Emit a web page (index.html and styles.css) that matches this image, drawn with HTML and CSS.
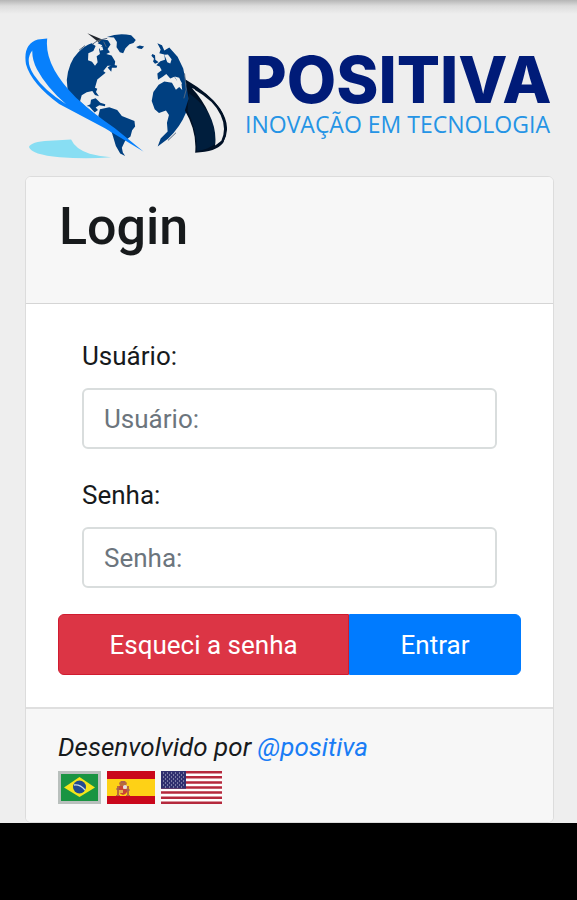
FILE: index.html
```html
<!DOCTYPE html>
<html lang="pt-BR">
<head>
  <meta charset="UTF-8">
  <meta name="viewport" content="width=device-width, initial-scale=1">
  <title>Positiva - Login</title>
  <link rel="stylesheet" href="styles.css">
</head>
<body>
  <main class="page">
    <header class="brand">
      <svg class="brand-globe" viewBox="27 36 609 384" aria-hidden="true">
        <!-- continents -->
        <g fill="#003f80">
          <path d="M156 216 L153 180 Q158 126 187 97 Q205 77 228 69 L240 77 L233 92 L218 99 L217 120 L229 125 L238 137 L246 126 L243 108 L253 101 L250 87 L260 75 L246 69 L258 57 L277 60 L285 73 L276 86 L283 96 L272 101 L288 106 L299 124 L297 137 L276 137 L263 153 L270 158 L245 178 L238 203 L245 206 L241 216 L250 229 L238 225 L230 213 L213 217 L198 226 L193 244 L208 259 L196 263 Q170 242 156 216Z"/>
          <path d="M274 50 Q310 36 347 45 L361 59 L354 68 L342 72 L330 84 L323 99 L313 96 L303 81 L304 65 L295 52Z"/>
          <path d="M362 80 L373 76 L386 79 L379 86 L369 85Z"/>
          <path d="M276 142 L290 133 L305 137 L303 143 L289 143 L287 155Z"/>
          <path d="M253 268 L281 262 L305 270 L319 288 L357 303 L359 320 L350 331 L345 350 L329 363 L319 384 L322 398 L329 409 L314 401 L301 379 L289 339 L257 306 L248 288Z"/>
          <path d="M226 239 L240 235 L254 248 L269 253 L268 259 L251 256 L240 263 L247 270 L237 278 L221 260 L213 258 L224 253Z"/>
          <path d="M426 69 L440 75 L447 91 L462 82 L487 110 L504 145 L511 180 L520 215 L520 250 L512 279 Q495 321 458 357 L427 380 L436 356 L457 335 L455 309 L461 285 L452 272 L431 279 L418 268 L409 243 L414 216 L430 194 L447 184 L470 188 L482 209 L492 201 L501 210 L498 185 L486 183 L477 170 L465 175 L453 162 L442 170 L428 179 L426 160 L439 150 L433 139 L423 135 L435 123 L449 119 L447 103 L432 99 L436 88Z"/>
          <path d="M411 101 L419 105 L420 119 L430 126 L419 131 L413 124 L416 116 L408 107Z"/>
        </g>
        <g fill="#eee">
          <path d="M447 104 L458 103 L469 117 L465 130 L456 126Z"/>
          <path d="M478 169 L492 173 L500 191 L491 195 L485 181Z"/>
          <path d="M252 80 L260 79 L263 89 L253 91Z"/>
        </g>
        <path d="M215 39 L260 58 L248 65Z" fill="#20252c"/>
        <path d="M190 90 L208 76 M230 72 L246 61 L275 54 M264 64 L272 80 M508 160 L513 209 L506 235 M482 339 L458 362" stroke="#536780" stroke-width="3" fill="none"/>
        <!-- right swoosh -->
        <path d="M511 178 Q586 222 615 266 Q652 321 624 370 Q603 397 540 399 Q546 334 509 272 L520 237Z" fill="#001126"/>
        <path d="M517 272 L521 220 Q588 267 600 333 Q605 359 600 373 Q580 389 545 394 Q547 336 517 272Z" fill="#001e3d"/>
        <path d="M530 204 Q590 226 612 272 Q646 325 620 367 L600 378 Q606 330 582 282 Q562 238 530 204Z" fill="#eee"/>
        <path d="M540 206 Q601 240 620 284 Q640 326 622 365 L602 381" fill="none" stroke="#001126" stroke-width="7"/>
        <!-- left swoosh -->
        <path d="M94 55 Q84 136 181 233 Q235 282 298 325 L384 395 L268 325 L130 252 Q46 190 30 132 Q20 72 66 58Z" fill="#0780fc"/>
        <path d="M49 91 Q48 119 63 147 Q91 200 151 253 Q84 211 54 165 Q25 121 49 91Z" fill="#eee"/>
        <path d="M166 359 Q179 388 222 402 Q257 411 287 413 Q212 419 132 413 Q46 405 39 382 Q44 366 100 363Z" fill="#88def3"/>
      </svg>
      <div class="brand-text">
        <span class="brand-name">POSITIVA</span>
        <span class="brand-tagline">INOVAÇÃO EM TECNOLOGIA</span>
      </div>
    </header>

    <form class="card">
      <div class="card-header">
        <h2>Login</h2>
      </div>
      <div class="card-body">
        <div class="form-group">
          <label for="usuario">Usuário:</label>
          <input type="text" id="usuario" name="usuario" placeholder="Usuário:">
        </div>
        <div class="form-group">
          <label for="senha">Senha:</label>
          <input type="password" id="senha" name="senha" placeholder="Senha:">
        </div>
        <div class="btn-group">
          <button type="button" class="btn btn-danger">Esqueci a senha</button>
          <button type="submit" class="btn btn-primary">Entrar</button>
        </div>
      </div>
      <div class="card-footer">
        <em>Desenvolvido por <a href="#">@positiva</a></em>
        <div class="flags">
          <a href="#" aria-label="Português">
            <svg width="43" height="33" viewBox="0 0 43 33">
              <path fill="#b9c0bd" d="M0 0h43v33H0z"/>
              <path fill="#199442" d="M3 3h37v27H3z"/>
              <path fill="#f5e51b" d="M21.500 6 L37 16.500 L21.500 26 L6 16.500Z"/>
              <circle cx="21.500" cy="16" r="6.500" fill="#214a91"/>
              <path d="M16 14 Q22 13 27 19" stroke="#c8d9e5" stroke-width="1.300" fill="none"/>
            </svg>
          </a>
          <a href="#" aria-label="Español">
            <svg width="48" height="33" viewBox="0 0 48 33">
              <path fill="#ca071b" d="M0 0h48v33H0z"/>
              <path fill="#fed116" d="M0 8h48v17H0z"/>
              <path fill="#b76b3c" d="M10 15h2v9h-2zM20 15h2v9h-2zM9 24h4v1H9zM19 24h4v1h-4zM12 12l2-2h4l2 2-1 3h-6z"/>
              <path fill="#c94336" d="M12 15h8v6q-4 6-8 0z"/>
              <path fill="#e8b74c" d="M16 15h4v3h-4zM12 19h4v3h-4z"/>
              <circle cx="18" cy="16" r="2" fill="#e5dce9"/>
              <path d="M9 18h4M19 19h4M14 11h4" stroke="#9b5964"/>
            </svg>
          </a>
          <a href="#" aria-label="English">
            <svg width="61" height="33" viewBox="0 0 61 33">
              <path fill="#fff" d="M0 0h61v33H0z"/>
              <path d="M0 1.250h61M0 6.350h61M0 11.400h61M0 16.500h61M0 21.600h61M0 26.700h61M0 31.750h61" stroke="#b5293d" stroke-width="2.500"/>
              <path fill="#30306f" d="M0 0h25v17.700H0z"/>
              <path d="M2 2h22M4 4h20M2 6h22M4 8h20M2 10h22M4 12h20M2 14h22M4 16h20" stroke="#c4c6dd" stroke-width="1" stroke-dasharray="1 3"/>
            </svg>
          </a>
        </div>
      </div>
    </form>
  </main>
  <div class="bottom-bar"></div>
</body>
</html>
```
FILE: styles.css
```css
* {
  box-sizing: border-box;
}

body {
  margin: 0;
  min-height: 100vh;
  display: flex;
  flex-direction: column;
  background: #eee;
  color: #171a1c;
  font-family: Roboto, "Liberation Sans", sans-serif;
  font-size: 26px;
  line-height: 40px;
}

.page {
  flex: 1;
  padding: 32px 23px 0 25px;
  background: linear-gradient(#b5b5b5, #dcdcdc 6px, #eee 14px);
}

.brand {
  display: flex;
  align-items: flex-start;
  gap: 18px;
  margin-bottom: 16px;
}

.brand-globe {
  width: 202px;
  height: 128px;
  flex-shrink: 0;
}

.brand-text {
  display: flex;
  flex-direction: column;
  padding-top: 16px;
  white-space: nowrap;
}

.brand-name {
  color: #001b78;
  font-family: Inter, sans-serif;
  font-size: 64px;
  font-weight: 800;
  line-height: 64px;
}

.brand-tagline {
  color: #2594e5;
  font-family: "Open Sans", sans-serif;
  font-size: 23px;
  line-height: 24px;
}

.card {
  border: 1px solid #dcdcdc;
  border-radius: 6px;
  background: #fff;
}

.card-header {
  padding: 19px 33px 45px;
  background: #f7f7f7;
  border-bottom: 1px solid #d5d5d5;
  border-radius: 5px 5px 0 0;
}

.card-header h2 {
  margin: 0;
  font-size: 52px;
  font-weight: 500;
  line-height: 62px;
}

.card-body {
  padding: 32px;
}

.form-group {
  padding: 0 24px;
  margin-bottom: 26px;
}

.form-group label {
  display: block;
  margin-bottom: 12px;
}

.form-group input {
  display: block;
  width: 100%;
  height: 61px;
  padding: 0 20px;
  border: 2px solid #d9dddd;
  border-radius: 6px;
  background: #fff;
  color: #495057;
  font: inherit;
}

.form-group input::placeholder {
  color: #6c757d;
  opacity: 1;
}

.btn-group {
  display: flex;
}

.btn {
  flex: 1 1 auto;
  height: 61px;
  padding: 0 20px;
  border: 1px solid;
  color: #fff;
  font: inherit;
  cursor: pointer;
}

.btn-danger {
  background: #dc3545;
  border-color: #d01c30;
  border-radius: 6px 0 0 6px;
}

.btn-primary {
  background: #007bff;
  border-color: #007bff;
  border-radius: 0 6px 6px 0;
}

.card-footer {
  padding: 18px 32px;
  background: #f7f7f7;
  border-top: 2px solid #dfdfdf;
  border-radius: 0 0 5px 5px;
}

a {
  color: #1a7df5;
  text-decoration: none;
}

.flags {
  display: flex;
  gap: 6px;
  margin-top: 4px;
}

.flags svg {
  display: block;
}

.bottom-bar {
  height: 77px;
  background: #000;
}
```
